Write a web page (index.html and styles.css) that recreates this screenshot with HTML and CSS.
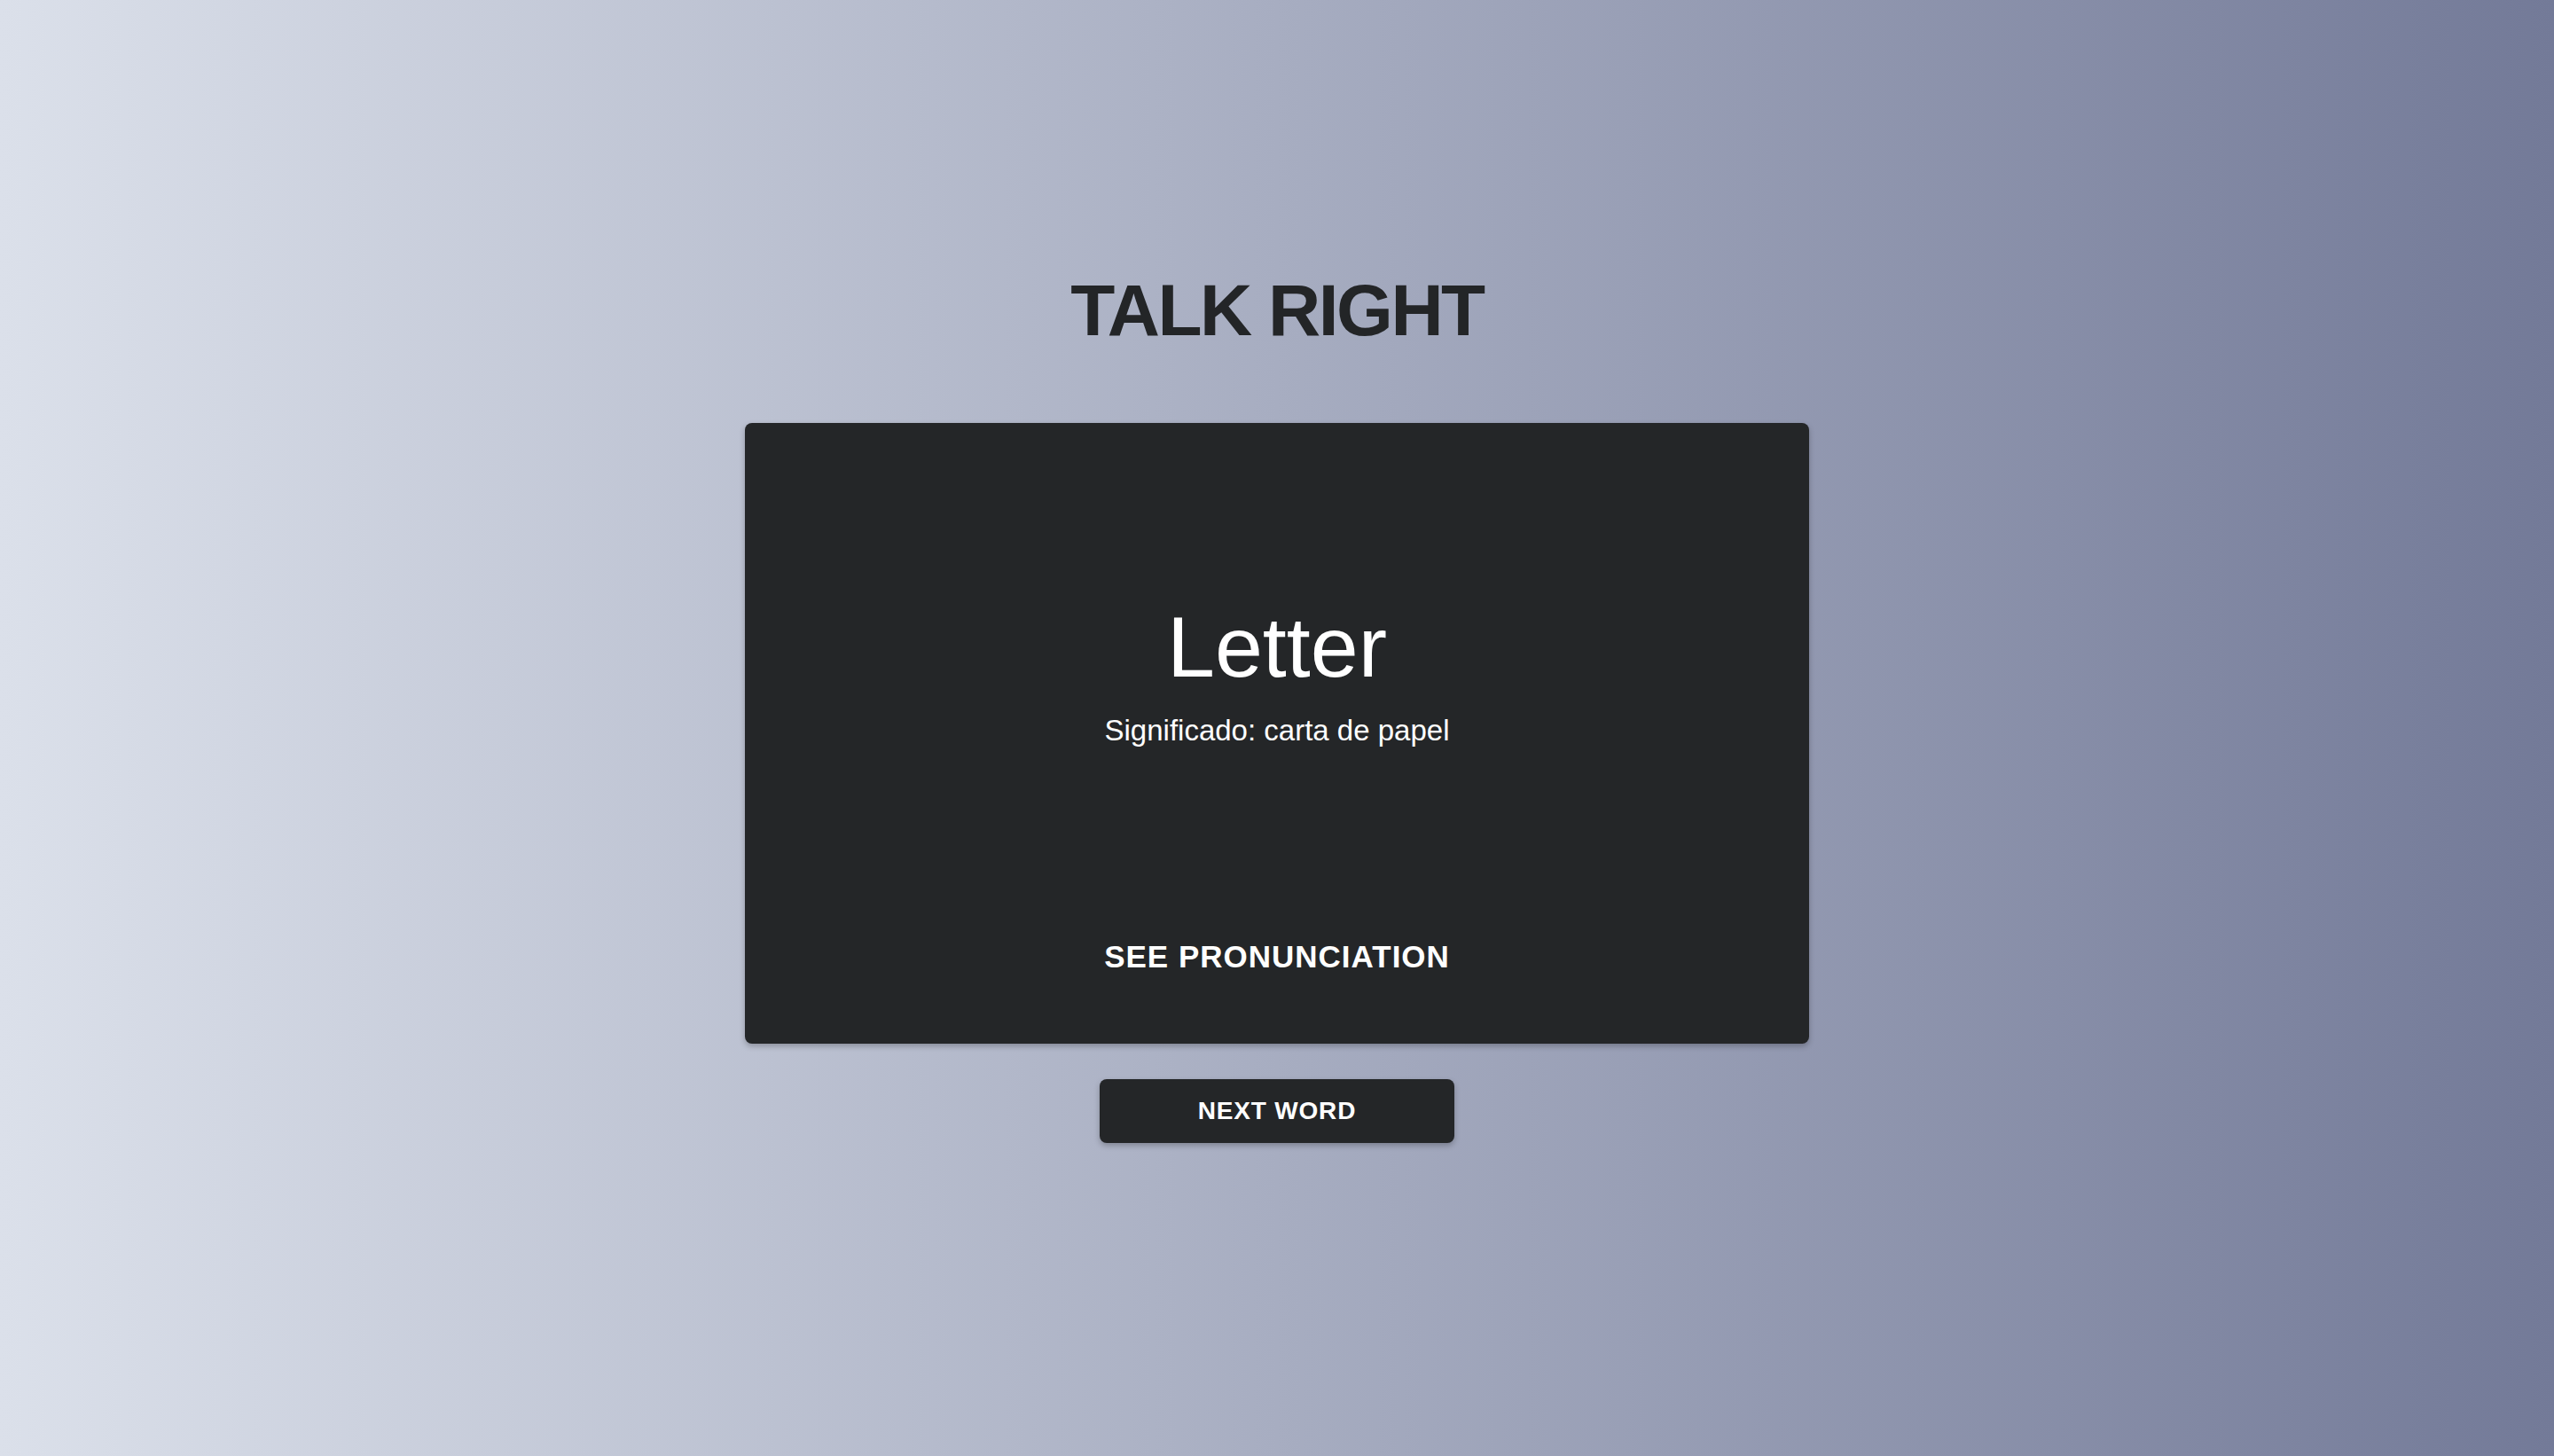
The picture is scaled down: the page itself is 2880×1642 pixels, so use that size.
FILE: index.html
```html
<!DOCTYPE html>
<html lang="es">
<head>
<meta charset="utf-8">
<title>Talk Right</title>
<link rel="stylesheet" href="styles.css">
</head>
<body>
<main class="page">
  <h1 class="title">TALK RIGHT</h1>
  <section class="card">
    <div class="word">Letter</div>
    <div class="meaning">Significado: carta de papel</div>
    <button class="see-btn" type="button">SEE PRONUNCIATION</button>
  </section>
  <button class="next-btn" type="button">NEXT WORD</button>
</main>
</body>
</html>
```
FILE: styles.css
```css
* { box-sizing: border-box; }
html, body { margin: 0; padding: 0; }
body {
  width: 2880px;
  height: 1642px;
  overflow: hidden;
  background: linear-gradient(to right, #dbe0ea 0%, #737a98 100%);
  font-family: "Liberation Sans", Arial, Helvetica, sans-serif;
  color: #232527;
}
.page {
  display: flex;
  flex-direction: column;
  align-items: center;
  padding-top: 309px;
}
.title {
  margin: 0;
  font-size: 82px;
  line-height: 1;
  font-weight: 700;
  letter-spacing: -2.5px;
  color: #232527;
}
.card {
  margin-top: 86px;
  width: 1200px;
  height: 700px;
  background: #242628;
  border-radius: 8px;
  box-shadow: 0 3px 6px rgba(0, 0, 0, 0.25);
  display: flex;
  flex-direction: column;
  align-items: center;
  padding-top: 204px;
  color: #ffffff;
}
.word {
  font-size: 97px;
  line-height: 1;
}
.meaning {
  margin-top: 29px;
  font-size: 33px;
  line-height: 1;
}
.see-btn {
  margin-top: 209px;
  padding: 12px 24px;
  background: transparent;
  border: 0;
  color: #ffffff;
  font-family: inherit;
  font-weight: 700;
  font-size: 35px;
  line-height: 1;
  letter-spacing: 1px;
  cursor: pointer;
}
.next-btn {
  margin-top: 40px;
  width: 400px;
  height: 72px;
  padding: 0;
  border: 0;
  border-radius: 8px;
  background: #242628;
  color: #ffffff;
  box-shadow: 0 3px 6px rgba(0, 0, 0, 0.25);
  font-family: inherit;
  font-weight: 700;
  font-size: 28px;
  line-height: 1;
  letter-spacing: 0.8px;
  cursor: pointer;
}
```
